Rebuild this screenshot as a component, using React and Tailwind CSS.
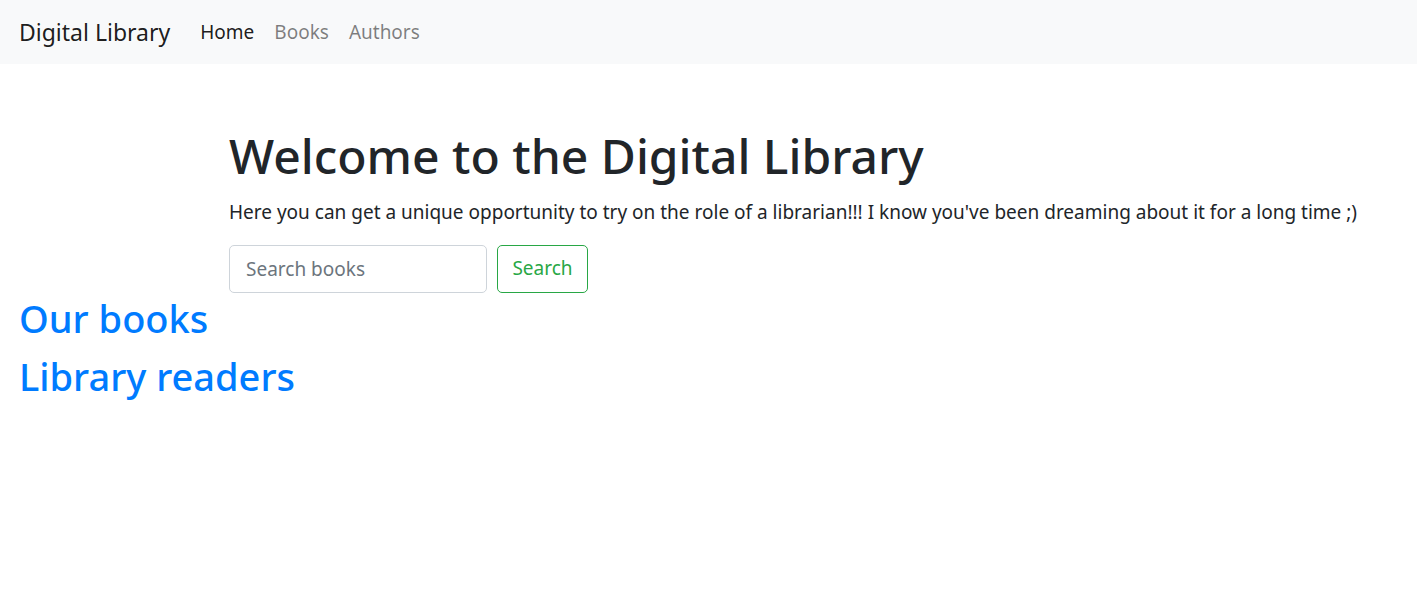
export default function App() {
  return (
    <div className="min-h-[599px] bg-white text-[#212529]" style={{ fontFamily: '"Noto Sans", "Open Sans", sans-serif' }}>
      <nav className="flex h-16 items-center bg-[#f8f9fa] px-4">
        <a href="#" className="mr-5 pl-[3px] text-[23px] leading-[34px] text-[rgba(0,0,0,0.9)]">Digital Library</a>
        <ul className="flex">
          <li><a href="#" className="block px-[10px] text-[19px] leading-7 text-[rgba(0,0,0,0.9)]">Home</a></li>
          <li><a href="#" className="block px-[10px] text-[19px] leading-7 text-[rgba(0,0,0,0.5)]">Books</a></li>
          <li><a href="#" className="block px-[10px] text-[19px] leading-7 text-[rgba(0,0,0,0.5)]">Authors</a></li>
        </ul>
      </nav>

      <div className="pl-[229px] pt-[63px]">
        <h1 className="mb-[13px] text-[48px] font-medium leading-[1.2]">Welcome to the Digital Library</h1>
        <p className="mb-[19px] text-[19px] leading-[28px]">
          Here you can get a unique opportunity to try on the role of a librarian!!! I know you've been dreaming about it for a long time ;)
        </p>
        <form className="flex gap-[10px]" onSubmit={(e) => e.preventDefault()}>
          <input
            type="text"
            placeholder="Search books"
            className="h-12 w-[258px] rounded-[5px] border border-[#ced4da] px-4 text-[19px] placeholder:text-[#6c757d] outline-none"
          />
          <button type="submit" className="h-12 w-[91px] rounded-[5px] border border-[#28a745] text-[19px] text-[#28a745]">
            Search
          </button>
        </form>
      </div>

      <div className="px-[19px] pt-[1px]">
        <h2 className="mb-[10px] text-[38px] font-medium leading-[48px] text-[#007bff]">Our books</h2>
        <h2 className="mb-[10px] text-[38px] font-medium leading-[48px] text-[#007bff]">Library readers</h2>
      </div>
    </div>
  );
}
